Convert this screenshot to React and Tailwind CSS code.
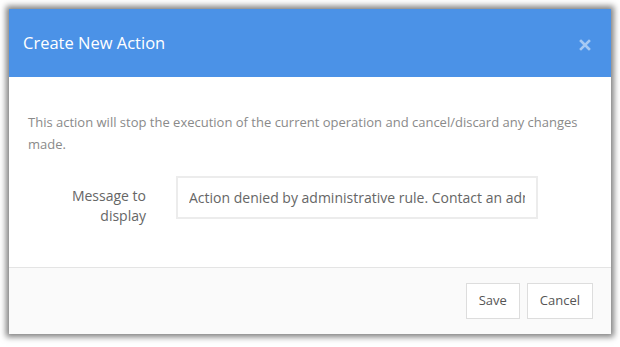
import React from "react";

const CloseIcon = () => (
  <svg width="12" height="12" viewBox="0 0 12 12" aria-hidden="true">
    <path d="M2 2 L10 10 M10 2 L2 10" stroke="currentColor" strokeWidth="2.6" strokeLinecap="square" />
  </svg>
);

export default function App() {
  return (
    <div
      className="w-[620px] h-[347px] bg-white pl-[9px] pt-[9px]"
      style={{ fontFamily: '"Open Sans", "Noto Sans", sans-serif' }}
    >
      <div className="w-[602px] h-[325px] bg-white flex flex-col shadow-[0_0_6px_3px_rgba(0,0,0,0.5)]">
        {/* Header */}
        <div className="h-[68px] shrink-0 bg-[#4b92e7] flex items-center justify-between pl-[14px] pr-[20px]">
          <h2 className="text-[16.5px] font-normal text-white leading-none">Create New Action</h2>
          <button className="text-white/50 mt-[4px]">
            <CloseIcon />
          </button>
        </div>

        {/* Body */}
        <div className="flex-1 px-[19px] pt-[34px]">
          <p className="text-[13px] leading-[22px] text-[#8a8a8a]">
            This action will stop the execution of the current operation and cancel/discard any changes made.
          </p>
          <div className="flex items-start mt-[21px]">
            <div className="w-[118px] flex justify-end pt-[10px]">
              <label className="w-[80px] text-right text-[14px] leading-[20px] text-[#666]">
                Message to display
              </label>
            </div>
            <input
              readOnly
              value="Action denied by administrative rule. Contact an administrator."
              className="ml-[30px] w-[362px] h-[43px] border-2 border-[#ececec] px-[11px] text-[14px] text-[#666] outline-none bg-white"
            />
          </div>
        </div>

        {/* Footer */}
        <div className="h-[67px] shrink-0 border-t border-[#e4e4e4] bg-[#fafafa] flex items-start justify-end gap-[7px] pt-[15px] pr-[18px]">
          <button className="h-[36px] px-[12px] border border-[#ddd] bg-white text-[13px] text-[#555]">Save</button>
          <button className="h-[36px] px-[12px] border border-[#ddd] bg-white text-[13px] text-[#555]">Cancel</button>
        </div>
      </div>
    </div>
  );
}
